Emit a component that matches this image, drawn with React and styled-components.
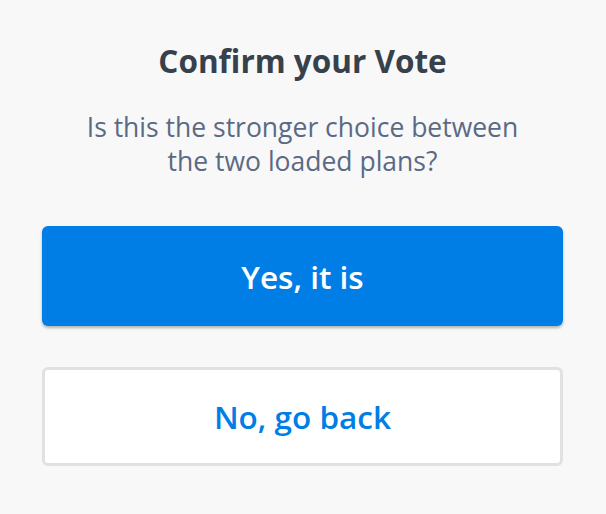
import React from 'react';
import styled, { createGlobalStyle } from 'styled-components';

const GlobalStyle = createGlobalStyle`
  html, body {
    margin: 0;
    padding: 0;
    background: #f8f8f8;
  }
  body {
    font-family: "Open Sans", "Noto Sans", sans-serif;
  }
`;

const Dialog = styled.div`
  padding: 41px 43px 48px 42px;
  display: flex;
  flex-direction: column;
  align-items: stretch;
`;

const Title = styled.h2`
  margin: 0;
  font-size: 31.5px;
  font-weight: 700;
  line-height: 40px;
  color: #37414b;
  text-align: center;
`;

const Question = styled.p`
  margin: 29px auto 0;
  max-width: 460px;
  font-size: 26.5px;
  font-weight: 500;
  line-height: 34px;
  color: #5b6a84;
  text-align: center;
`;

const Actions = styled.div`
  margin-top: 48px;
  display: flex;
  flex-direction: column;
  gap: 41px;
`;

const Button = styled.button`
  height: ${({ $primary }) => ($primary ? '100px' : '99px')};
  border-radius: 6px;
  font-family: inherit;
  font-size: 31.5px;
  font-weight: 600;
  cursor: pointer;
  border: ${({ $primary }) => ($primary ? 'none' : '3px solid #e1e1e1')};
  background: ${({ $primary }) => ($primary ? '#007ee5' : '#ffffff')};
  color: ${({ $primary }) => ($primary ? '#ffffff' : '#007ee5')};
  box-shadow: ${({ $primary }) => ($primary ? '0 2px 3px rgba(0, 0, 0, 0.28)' : 'none')};
`;

export default function App() {
  return (
    <>
      <GlobalStyle />
      <Dialog>
        <Title>Confirm your Vote</Title>
        <Question>Is this the stronger choice between the two loaded plans?</Question>
        <Actions>
          <Button $primary>Yes, it is</Button>
          <Button>No, go back</Button>
        </Actions>
      </Dialog>
    </>
  );
}
